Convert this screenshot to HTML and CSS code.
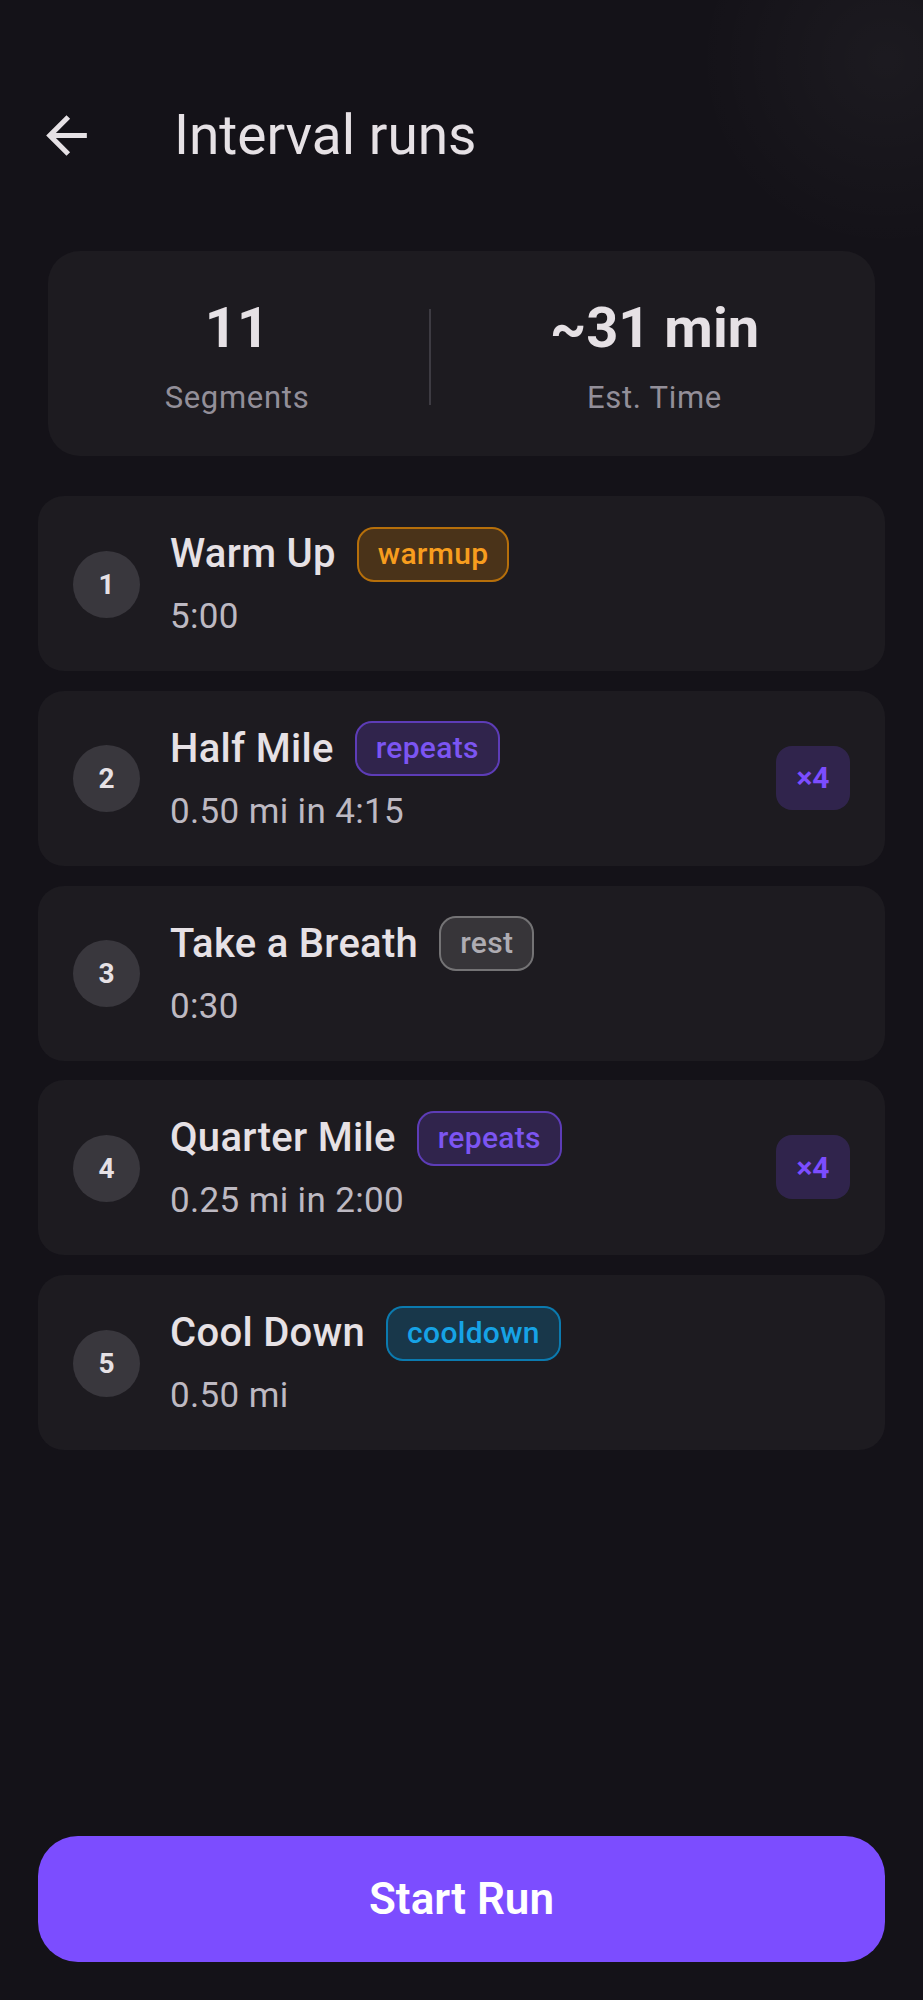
FILE: index.html
```html
<!DOCTYPE html>
<html lang="en">

<head>
    <meta charset="UTF-8">
    <meta name="viewport" content="width=device-width, initial-scale=1.0">
    <title>Interval runs</title>
    <link rel="stylesheet" href="styles.css">
</head>

<body>
    <div class="screen">
        <!-- App bar -->
        <header class="app-bar">
            <button class="back-btn" aria-label="Back">
                <svg viewBox="0 0 24 24" width="61" height="61">
                    <path d="M20 11H7.83l5.59-5.59L12 4l-8 8 8 8 1.41-1.41L7.83 13H20v-2z" fill="#e6e1e5"/>
                </svg>
            </button>
            <h1 class="app-title">Interval runs</h1>
        </header>

        <!-- Summary -->
        <section class="summary">
            <div class="stat">
                <div class="stat-value">11</div>
                <div class="stat-label">Segments</div>
            </div>
            <div class="stat-divider"><span></span></div>
            <div class="stat">
                <div class="stat-value">~31 min</div>
                <div class="stat-label">Est. Time</div>
            </div>
        </section>

        <!-- Segments -->
        <ul class="segments">
            <li class="segment">
                <div class="seg-num">1</div>
                <div class="seg-body">
                    <div class="seg-head">
                        <span class="seg-name">Warm Up</span>
                        <span class="tag tag-warmup">warmup</span>
                    </div>
                    <div class="seg-detail">5:00</div>
                </div>
            </li>
            <li class="segment">
                <div class="seg-num">2</div>
                <div class="seg-body">
                    <div class="seg-head">
                        <span class="seg-name">Half Mile</span>
                        <span class="tag tag-repeats">repeats</span>
                    </div>
                    <div class="seg-detail">0.50 mi in 4:15</div>
                </div>
                <div class="seg-repeat">×4</div>
            </li>
            <li class="segment">
                <div class="seg-num">3</div>
                <div class="seg-body">
                    <div class="seg-head">
                        <span class="seg-name">Take a Breath</span>
                        <span class="tag tag-rest">rest</span>
                    </div>
                    <div class="seg-detail">0:30</div>
                </div>
            </li>
            <li class="segment">
                <div class="seg-num">4</div>
                <div class="seg-body">
                    <div class="seg-head">
                        <span class="seg-name">Quarter Mile</span>
                        <span class="tag tag-repeats">repeats</span>
                    </div>
                    <div class="seg-detail">0.25 mi in 2:00</div>
                </div>
                <div class="seg-repeat">×4</div>
            </li>
            <li class="segment">
                <div class="seg-num">5</div>
                <div class="seg-body">
                    <div class="seg-head">
                        <span class="seg-name">Cool Down</span>
                        <span class="tag tag-cooldown">cooldown</span>
                    </div>
                    <div class="seg-detail">0.50 mi</div>
                </div>
            </li>
        </ul>

        <div class="footer">
            <button class="start-btn">Start Run</button>
        </div>
    </div>
</body>

</html>
```

FILE: styles.css
```css
body {
    font-family: Roboto, "Noto Sans", Arial, sans-serif;
    margin: 0;
    padding: 0;
    background-color: #141218;
    background-image: radial-gradient(circle at 96% 3%, rgba(255, 255, 255, 0.035), rgba(255, 255, 255, 0) 190px);
    color: #e6e1e5;
}

.screen {
    display: flex;
    flex-direction: column;
    height: 100vh;
    box-sizing: border-box;
    padding-bottom: 38px;
}

/* App bar */
.app-bar {
    display: flex;
    align-items: center;
    height: 80px;
    margin-top: 95px;
    padding-left: 36px;
}

.back-btn {
    display: flex;
    align-items: center;
    justify-content: center;
    width: 61px;
    height: 61px;
    padding: 0;
    background: none;
    border: none;
    cursor: pointer;
}

.app-title {
    margin: 0 0 0 77px;
    font-size: 55px;
    font-weight: 400;
    line-height: 80px;
    color: #e6e1e5;
}

/* Summary card */
.summary {
    display: grid;
    grid-template-columns: 330px 56px 1fr;
    align-items: center;
    margin: 76px 48px 0;
    padding: 45px 24px 38px;
    background-color: #1d1b20;
    border-radius: 32px;
}

.stat {
    text-align: center;
}

.stat-value {
    font-size: 56px;
    font-weight: 700;
    line-height: 64px;
    color: #e6e1e5;
}

.stat-label {
    margin-top: 18px;
    font-size: 31px;
    line-height: 40px;
    letter-spacing: 0.7px;
    color: #938f99;
}

.stat-divider {
    display: flex;
    justify-content: center;
}

.stat-divider span {
    width: 2px;
    height: 96px;
    background-color: #3d3b42;
}

/* Segment list */
.segments {
    list-style: none;
    margin: 40px 38px 0;
    padding: 0;
    display: flex;
    flex-direction: column;
    gap: 19.75px;
}

.segment {
    display: flex;
    align-items: center;
    padding: 31px 35px 32px;
    background-color: #1d1b20;
    border-radius: 26px;
}

.seg-num {
    flex: 0 0 67px;
    height: 67px;
    border-radius: 50%;
    background-color: #39373d;
    display: flex;
    align-items: center;
    justify-content: center;
    font-size: 28px;
    font-weight: 700;
    color: #e6e1e5;
    margin-top: 2px;
}

.seg-body {
    flex: 1;
    margin-left: 30px;
}

.seg-head {
    display: flex;
    align-items: center;
    height: 54px;
}

.seg-name {
    font-size: 40px;
    font-weight: 500;
    line-height: 54px;
    letter-spacing: 0.3px;
    color: #e6e1e5;
}

.seg-detail {
    margin-top: 14px;
    font-size: 35px;
    line-height: 44px;
    letter-spacing: 0.35px;
    color: #bdb9c2;
}

.tag {
    display: inline-flex;
    align-items: center;
    box-sizing: border-box;
    height: 55px;
    margin-left: 21px;
    padding: 0 19px 2px;
    border: 2px solid;
    border-radius: 17px;
    font-size: 30px;
    font-weight: 500;
    letter-spacing: 0.3px;
}

.tag-warmup {
    color: #f79d1e;
    background-color: rgba(255, 152, 0, 0.2);
    border-color: rgba(255, 152, 0, 0.6);
}

.tag-repeats {
    color: #7c55f2;
    background-color: rgba(124, 77, 255, 0.2);
    border-color: rgba(124, 77, 255, 0.6);
}

.tag-rest {
    color: #aeacb2;
    background-color: rgba(158, 158, 158, 0.2);
    border-color: rgba(158, 158, 158, 0.6);
}

.tag-cooldown {
    color: #16a3e6;
    background-color: rgba(3, 169, 244, 0.2);
    border-color: rgba(3, 169, 244, 0.6);
}

.seg-repeat {
    display: flex;
    align-items: center;
    justify-content: center;
    width: 74px;
    height: 64px;
    border-radius: 16px;
    background-color: rgba(124, 77, 255, 0.2);
    color: #7c4dff;
    font-size: 30px;
    font-weight: 700;
}

/* Bottom button */
.footer {
    margin-top: auto;
    padding: 0 38px;
}

.start-btn {
    display: block;
    width: 100%;
    height: 126px;
    background-color: #7c4dff;
    color: #ffffff;
    border: none;
    border-radius: 40px;
    font-family: Roboto, "Noto Sans", Arial, sans-serif;
    font-size: 44px;
    font-weight: 600;
    cursor: pointer;
}
```
